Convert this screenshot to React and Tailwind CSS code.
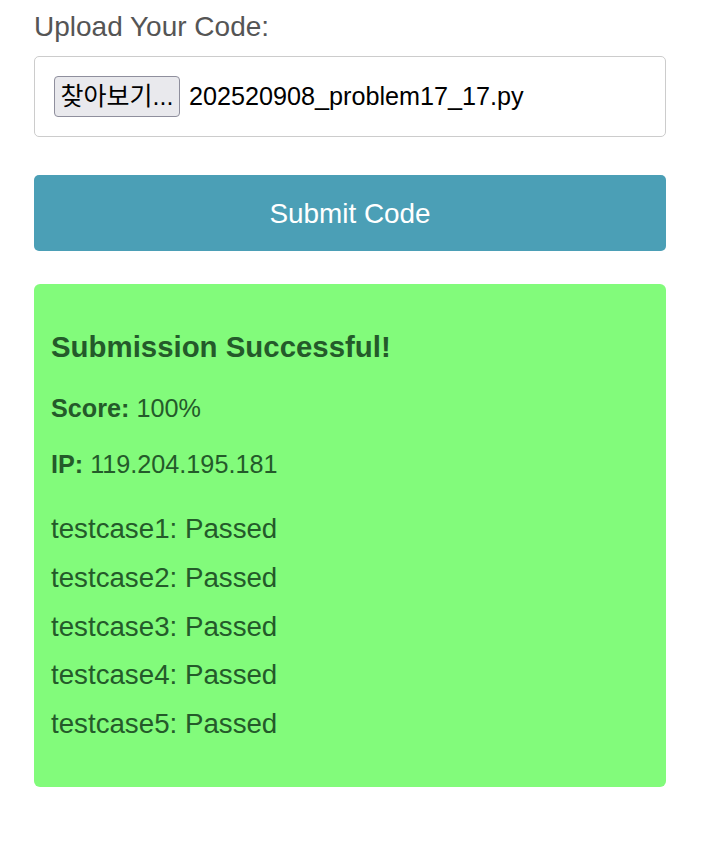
export default function App() {
  const cases = [1, 2, 3, 4, 5];
  return (
    <div className="min-h-screen bg-white font-['Liberation_Sans',Arial,sans-serif]">
      <div className="ml-[34px] w-[632px] pt-[11px]">
        {/* Upload label */}
        <label className="block text-[28px] leading-[31px] text-[#555555]">
          Upload Your Code:
        </label>

        {/* File input */}
        <div className="mt-[14px] flex h-[81px] items-center rounded-[5px] border border-[#cccccc] px-[19px]">
          <span className="flex h-[41px] w-[126px] items-center justify-center rounded-[4px] border border-[#8f8f9d] bg-[#e9e9ed] text-[25px] text-black font-['Liberation_Sans','Noto_Sans_CJK_KR',sans-serif]">
            찾아보기...
          </span>
          <span className="ml-[9px] text-[25.2px] text-black">202520908_problem17_17.py</span>
        </div>

        {/* Submit */}
        <button className="mt-[38px] flex h-[76px] w-full items-center justify-center rounded-[5px] bg-[#4b9fb6] pt-[2px] text-[27.9px] text-white">
          Submit Code
        </button>

        {/* Result */}
        <div className="mt-[33px] h-[503px] rounded-[6px] bg-[#82fb7b] px-[17px] pt-[46px] text-[#245a2a]">
          <h3 className="text-[29.4px] font-bold leading-[34px]">Submission Successful!</h3>
          <p className="mt-[29px] text-[25.2px] leading-[30px]">
            <strong>Score:</strong> 100%
          </p>
          <p className="mt-[26px] text-[25.2px] leading-[30px]">
            <strong>IP:</strong> 119.204.195.181
          </p>
          <div className="mt-[25px] pt-[1px]">
            {cases.map((n) => (
              <div key={n} className="text-[27.7px] leading-[48.75px]">
                testcase{n}: Passed
              </div>
            ))}
          </div>
        </div>
      </div>
    </div>
  );
}
